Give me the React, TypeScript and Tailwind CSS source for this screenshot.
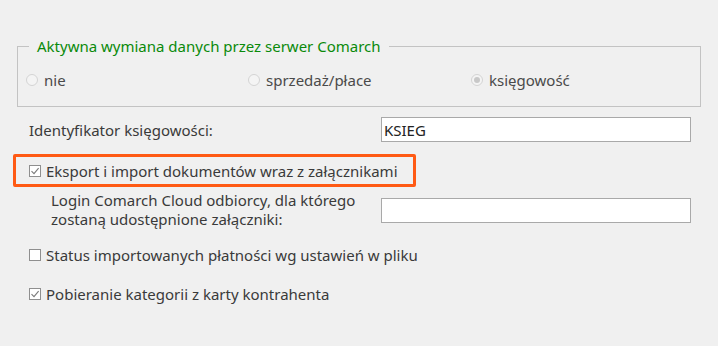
const Radio = ({ checked, label }: { checked?: boolean; label: string }) => (
  <div className="flex items-center gap-[6px]">
    <span className="flex h-[12px] w-[12px] items-center justify-center rounded-full border border-[#d4d4d4] bg-[#f4f4f4]">
      {checked && <span className="h-[6px] w-[6px] rounded-full bg-[#c8c8c8]" />}
    </span>
    <span className="text-[#4a4a4a]">{label}</span>
  </div>
);

const Check = ({ checked, label }: { checked?: boolean; label: string }) => (
  <div className="flex items-center gap-[5px]">
    <span className="flex h-[12px] w-[12px] items-center justify-center border border-[#8f8f8f] bg-white">
      {checked && (
        <svg width="10" height="10" viewBox="0 0 10 10">
          <path d="M1.5 5.2 L4 7.6 L8.6 2.2" fill="none" stroke="#7a7a7a" strokeWidth="1.1" />
        </svg>
      )}
    </span>
    <span>{label}</span>
  </div>
);

export default function App() {
  return (
    <div
      className="flex h-[346px] w-[718px] flex-col bg-[#f0f0f0] text-[15px] leading-[18px] text-[#3a3a3a]"
      style={{ fontFamily: '"Segoe UI", "Noto Sans", sans-serif' }}
    >
      <fieldset className="ml-[17px] mt-[37px] h-[70px] w-[684px] border border-[#c3c3c3] pl-[8px] pr-[8px]">
        <legend className="ml-[3px] px-[8px] text-[#0a8a0a]">Aktywna wymiana danych przez serwer Comarch</legend>
        <div className="mt-[16px] flex">
          <div className="w-[222px]"><Radio label="nie" /></div>
          <div className="w-[223px]"><Radio label="sprzedaż/płace" /></div>
          <Radio checked label="księgowość" />
        </div>
      </fieldset>

      <div className="mt-[10px] flex items-center">
        <span className="ml-[29px] w-[352px]">Identyfikator księgowości:</span>
        <div className="flex h-[25px] w-[310px] items-center border border-[#a9a9a9] bg-white px-[2px] text-[#222]">KSIEG</div>
      </div>

      <div className="ml-[13px] mt-[12px] flex h-[33px] w-[403px] items-center rounded-[2px] border-[3px] border-[#ff5a14] pl-[13px]">
        <Check checked label="Eksport i import dokumentów wraz z załącznikami" />
      </div>

      <div className="mt-[4px] flex items-center">
        <span className="ml-[51px] w-[330px] leading-[19px]">
          Login Comarch Cloud odbiorcy, dla którego
          <br />
          zostaną udostępnione załączniki:
        </span>
        <div className="h-[25px] w-[310px] border border-[#a9a9a9] bg-white" />
      </div>

      <div className="ml-[29px] mt-[17px]">
        <Check label="Status importowanych płatności wg ustawień w pliku" />
      </div>
      <div className="ml-[29px] mt-[21px]">
        <Check checked label="Pobieranie kategorii z karty kontrahenta" />
      </div>
    </div>
  );
}
